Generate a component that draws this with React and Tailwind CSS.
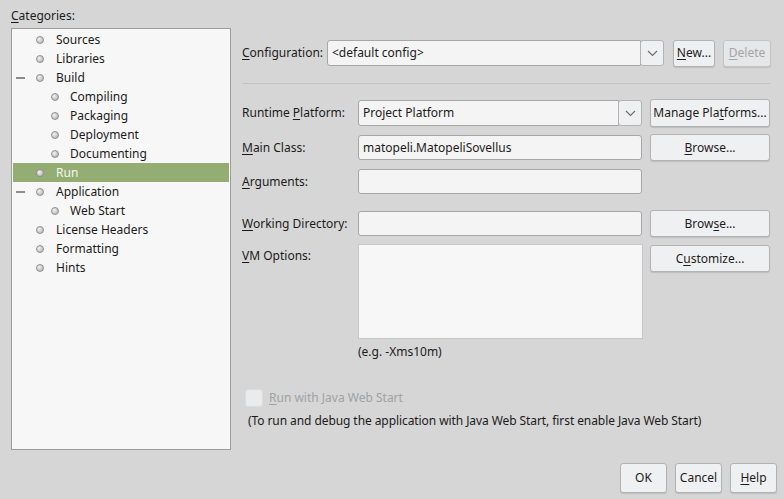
import React from 'react';

const U = ({ children }) => <span className="underline underline-offset-2">{children}</span>;

function Bullet({ className = '' }) {
  return (
    <span
      className={
        'shrink-0 block w-[8px] h-[8px] rounded-full border border-[#8f8f8f] bg-[radial-gradient(circle_at_35%_35%,#f4f4f4,#a8a8a8)] ' +
        className
      }
    />
  );
}

const tree = [
  { label: 'Sources', level: 1 },
  { label: 'Libraries', level: 1 },
  { label: 'Build', level: 1, open: true },
  { label: 'Compiling', level: 2 },
  { label: 'Packaging', level: 2 },
  { label: 'Deployment', level: 2 },
  { label: 'Documenting', level: 2 },
  { label: 'Run', level: 1, selected: true },
  { label: 'Application', level: 1, open: true },
  { label: 'Web Start', level: 2 },
  { label: 'License Headers', level: 1 },
  { label: 'Formatting', level: 1 },
  { label: 'Hints', level: 1 },
];

function TreeRow({ item }) {
  return (
    <div
      className={
        'relative flex items-center h-[19px] ' +
        (item.selected ? 'bg-[#93ad72] text-[#f4f7ef]' : '')
      }
    >
      {item.open && <span className="absolute left-[3px] top-[9px] w-[9px] h-[2px] bg-[#8c8c8c]" />}
      <Bullet className={item.level === 1 ? 'ml-[23px]' : 'ml-[38px]'} />
      <span className={item.level === 1 ? 'ml-[12px]' : 'ml-[11px]'}>{item.label}</span>
    </div>
  );
}

function Btn({ children, className = '', disabled }) {
  return (
    <div
      className={
        'flex items-center justify-center rounded-[3px] border shadow-[0_1px_1px_rgba(0,0,0,0.12)] ' +
        (disabled
          ? 'border-[#c4c4c4] bg-[#e6e7e8] text-[#a3a5a7]'
          : 'border-[#b3b3b3] bg-[#eff0f1] text-[#1d1d1d]') +
        ' ' + className
      }
    >
      {children}
    </div>
  );
}

function Field({ children, className = '' }) {
  return (
    <div className={'flex items-center px-[4px] rounded-[3px] border border-[#a6a6a6] bg-[#f4f4f4] ' + className}>
      {children}
    </div>
  );
}

function Chevron() {
  return (
    <svg width="11" height="7" viewBox="0 0 11 7">
      <path d="M1 1 L5.5 5.5 L10 1" fill="none" stroke="#6b6b6b" strokeWidth="1.1" />
    </svg>
  );
}

function Combo({ text, className = '' }) {
  return (
    <div className={'flex ' + className}>
      <Field className="flex-1 rounded-r-none">{text}</Field>
      <div className="w-[24px] flex items-center justify-center rounded-[3px] border border-[#b3b3b3] bg-[#eff0f1] -ml-px">
        <Chevron />
      </div>
    </div>
  );
}

export default function App() {
  return (
    <div
      className="w-[784px] h-[499px] bg-[#d6d6d6] text-[#1b1b1b] text-[12px] overflow-hidden flex flex-col"
      style={{ fontFamily: '"Noto Sans", "Open Sans", sans-serif' }}
    >
      <div className="flex flex-1">
        {/* categories */}
        <div className="pl-[11px] pt-[7px] w-[231px]">
          <div className="h-[21px]"><U>C</U>ategories:</div>
          <div className="w-[220px] h-[422px] border border-[#9c9c9c] bg-[#f7f7f7] pt-[1px] px-px">
            {tree.map((t) => (
              <TreeRow key={t.label} item={t} />
            ))}
          </div>
        </div>

        {/* settings */}
        <div className="pl-[11px] pt-[40px] w-[540px]">
          <div className="flex items-center h-[26px]">
            <span className="w-[85px]"><U>C</U>onfiguration:</span>
            <Combo text="<default config>" className="w-[337px] h-[26px]" />
            <Btn className="ml-[9px] w-[42px] h-[27px]"><span><U>N</U>ew...</span></Btn>
            <Btn disabled className="ml-[8px] w-[48px] h-[27px]"><span><U>D</U>elete</span></Btn>
          </div>

          <div className="mt-[17px] h-px bg-[#c3c3c3] w-[528px]" />

          <div className="flex items-center mt-[15px] h-[28px]">
            <span className="w-[116px]">Runtime <U>P</U>latform:</span>
            <Combo text="Project Platform" className="w-[284px] h-[26px]" />
            <Btn className="ml-[8px] w-[120px] h-[28px]"><span>Manage Pla<U>t</U>forms...</span></Btn>
          </div>

          <div className="flex items-center mt-[7px] h-[27px]">
            <span className="w-[116px]"><U>M</U>ain Class:</span>
            <Field className="w-[284px] h-[25px]">matopeli.MatopeliSovellus</Field>
            <Btn className="ml-[8px] w-[120px] h-[27px]"><span><U>B</U>rowse...</span></Btn>
          </div>

          <div className="flex items-center mt-[8px] h-[25px]">
            <span className="w-[116px]"><U>A</U>rguments:</span>
            <Field className="w-[284px] h-[25px]" />
          </div>

          <div className="flex items-center mt-[16px] h-[27px]">
            <span className="w-[116px]"><U>W</U>orking Directory:</span>
            <Field className="w-[284px] h-[25px]" />
            <Btn className="ml-[8px] w-[120px] h-[27px]"><span>Brow<U>s</U>e...</span></Btn>
          </div>

          <div className="flex items-start mt-[7px]">
            <span className="w-[116px] pt-[3px]"><U>V</U>M Options:</span>
            <div className="w-[285px] h-[95px] border border-[#c8c8c8] bg-[#f7f7f7]" />
            <Btn className="ml-[7px] w-[120px] h-[27px] mt-px"><span>C<U>u</U>stomize...</span></Btn>
          </div>

          <div className="pl-[116px] mt-[4px] h-[18px]">(e.g. -Xms10m)</div>

          <div className="flex items-center mt-[28px] h-[18px] pl-[3px]">
            <span className="w-[18px] h-[18px] rounded-[3px] border border-[#dcdcdc] bg-[#eaebec]" />
            <span className="ml-[6px] text-[#a0a2a4]"><U>R</U>un with Java Web Start</span>
          </div>

          <div className="mt-[5px] pl-[6px] tracking-[-0.08px]">
            (To run and debug the application with Java Web Start, first enable Java Web Start)
          </div>
        </div>
      </div>

      <div className="flex justify-end gap-[8px] pr-[7px] pb-[6px] h-[36px]">
        <Btn className="w-[47px] h-[30px] border-[#9a9a9a]">OK</Btn>
        <Btn className="w-[47px] h-[30px]">Cancel</Btn>
        <Btn className="w-[47px] h-[30px]"><span><U>H</U>elp</span></Btn>
      </div>
    </div>
  );
}
